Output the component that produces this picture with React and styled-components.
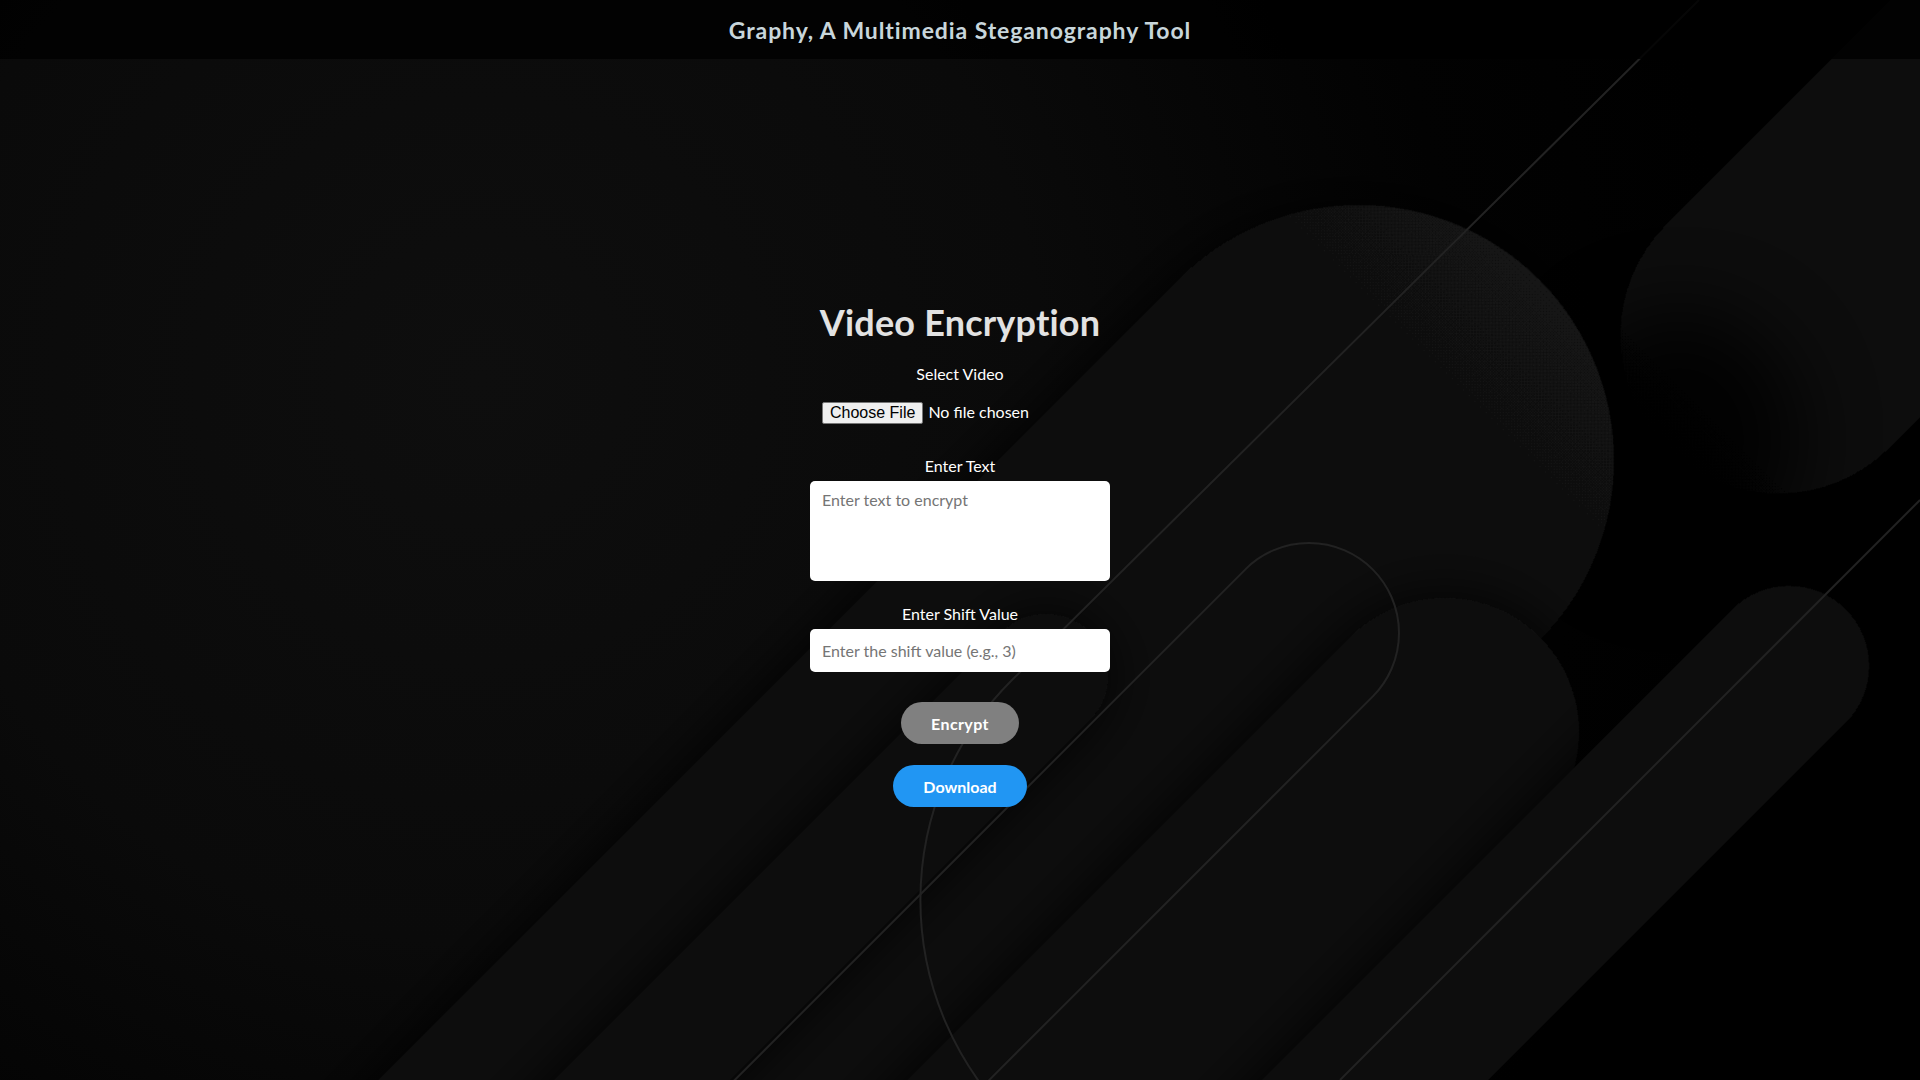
import styled, { createGlobalStyle } from "styled-components";

const GlobalStyle = createGlobalStyle`
  html, body {
    margin: 0;
    padding: 0;
    background: #000;
  }
  body {
    font-family: Lato, "Open Sans", "Noto Sans", sans-serif;
  }
  * {
    box-sizing: border-box;
  }
`;

const Page = styled.div`
  position: relative;
  min-height: 100vh;
  overflow: hidden;
  background: #000;
`;

const Backdrop = styled.svg`
  position: absolute;
  inset: 0;
  width: 100%;
  height: 100%;
  z-index: 0;
`;

const Header = styled.header`
  position: relative;
  z-index: 1;
  height: 59px;
  display: flex;
  align-items: center;
  justify-content: center;
  background: rgba(0, 0, 0, 0.8);
  color: #c8d6db;
  font-size: 23px;
  font-weight: 700;
  letter-spacing: 0.9px;
`;

const Main = styled.main`
  position: relative;
  z-index: 1;
  display: flex;
  flex-direction: column;
  align-items: center;
  padding-top: 242px;
`;

const Title = styled.h2`
  margin: 0;
  font-size: 36px;
  line-height: 43px;
  font-weight: 700;
  letter-spacing: 0.2px;
  color: #e2e2e2;
`;

const Label = styled.label`
  display: block;
  margin-top: ${(p) => p.$top}px;
  font-size: 16px;
  line-height: 19px;
  color: #fff;
`;

const FileInput = styled.input`
  width: 276px;
  margin-top: 19px;
  font-family: Lato, "Open Sans", sans-serif;
  font-size: 16px;
  color: #fff;

  &::file-selector-button {
    font-family: "Liberation Sans", Arial, sans-serif;
    font-size: 16px;
    padding: 1px 7px;
    margin-right: 5px;
    color: #000;
    background: #efefef;
    border: 1px solid #767676;
    border-radius: 2px;
  }
`;

const fieldBase = `
  width: 300px;
  margin-top: 6px;
  padding: 0 12px;
  border: none;
  border-radius: 5px;
  background: #fff;
  font-family: Lato, "Open Sans", sans-serif;
  font-size: 16px;
  color: #222;
  outline: none;

  &::placeholder {
    color: #757575;
  }
`;

const TextArea = styled.textarea`
  ${fieldBase}
  height: 100px;
  padding-top: 9px;
  resize: none;
`;

const TextInput = styled.input`
  ${fieldBase}
  height: 43px;
`;

const PillButton = styled.button`
  margin-top: ${(p) => p.$top}px;
  height: 42px;
  padding: 0 ${(p) => p.$pad}px;
  border: none;
  border-radius: 21px;
  background: ${(p) => p.$bg};
  color: #fff;
  font-family: Lato, "Open Sans", sans-serif;
  font-size: 16px;
  font-weight: 700;
  letter-spacing: ${(p) => p.$track || 0}px;
  cursor: pointer;
`;

const Capsule = ({ cx, cy, r, angle, len = 2400, fill, stroke, filter }) => (
  <rect
    x={-r}
    y={-r}
    width={r * 2}
    height={len}
    rx={r}
    ry={r}
    transform={`translate(${cx} ${cy}) rotate(${angle})`}
    fill={fill || "none"}
    stroke={stroke}
    strokeWidth={stroke ? 2 : 0}
    filter={filter}
  />
);

const Background = () => (
  <Backdrop viewBox="0 0 1920 1080" preserveAspectRatio="xMidYMid slice">
    <defs>
      <radialGradient id="base" cx="480" cy="380" r="1250" gradientUnits="userSpaceOnUse">
        <stop offset="0" stopColor="#0e0e0e" />
        <stop offset="0.45" stopColor="#0a0a0a" />
        <stop offset="0.78" stopColor="#020202" />
        <stop offset="1" stopColor="#000" />
      </radialGradient>
      <linearGradient id="gA" x1="0" y1="-255" x2="0" y2="1100" gradientUnits="userSpaceOnUse">
        <stop offset="0" stopColor="#121212" />
        <stop offset="0.4" stopColor="#0e0e0e" />
        <stop offset="1" stopColor="#080808" />
      </linearGradient>
      <linearGradient id="gB" x1="0" y1="-134" x2="0" y2="900" gradientUnits="userSpaceOnUse">
        <stop offset="0" stopColor="#111" />
        <stop offset="1" stopColor="#090909" />
      </linearGradient>
      <linearGradient id="gC" x1="0" y1="-80" x2="0" y2="700" gradientUnits="userSpaceOnUse">
        <stop offset="0" stopColor="#111" />
        <stop offset="1" stopColor="#090909" />
      </linearGradient>
      <linearGradient id="gD" x1="0" y1="-156" x2="0" y2="560" gradientUnits="userSpaceOnUse">
        <stop offset="0" stopColor="#060606" />
        <stop offset="0.3" stopColor="#0a0a0a" />
        <stop offset="1" stopColor="#0e0e0e" />
      </linearGradient>
      <filter id="shadow" x="-50%" y="-50%" width="200%" height="200%">
        <feDropShadow dx="0" dy="0" stdDeviation="28" floodColor="#000" floodOpacity="0.95" />
      </filter>
      <filter id="soft" x="-100%" y="-100%" width="300%" height="300%">
        <feGaussianBlur stdDeviation="40" />
      </filter>
    </defs>
    <rect width="1920" height="1080" fill="url(#base)" />
    <Capsule cx={1778} cy={336} r={158} angle={225} fill="url(#gD)" filter="url(#shadow)" />
    <ellipse cx="1680" cy="440" rx="120" ry="130" fill="#000" opacity="0.85" filter="url(#soft)" />
    <Capsule cx={1359} cy={460} r={255} angle={45} fill="url(#gA)" filter="url(#shadow)" />
    <Capsule cx={1046} cy={676} r={62} angle={45} fill="url(#gB)" filter="url(#shadow)" />
    <Capsule cx={1445} cy={732} r={134} angle={45} fill="url(#gB)" filter="url(#shadow)" />
    <Capsule cx={1789} cy={666} r={80} angle={45} fill="url(#gC)" filter="url(#shadow)" />
    <Capsule cx={1309} cy={633} r={90} angle={45} stroke="#222" />
    <path d="M 1699 0 L 1011 681 A 310 310 0 0 0 1011 1119" fill="none" stroke="#222" strokeWidth="2" />
    <path d="M 1920 500 L 1340 1080" fill="none" stroke="#222" strokeWidth="2" />
  </Backdrop>
);

export default function App() {
  return (
    <>
      <GlobalStyle />
      <Page>
        <Background />
        <Header>Graphy, A Multimedia Steganography Tool</Header>
        <Main>
          <Title>Video Encryption</Title>
          <Label $top={20} htmlFor="video">Select Video</Label>
          <FileInput id="video" type="file" accept="video/*" />
          <Label $top={32} htmlFor="secret">Enter Text</Label>
          <TextArea id="secret" placeholder="Enter text to encrypt" />
          <Label $top={23} htmlFor="shift">Enter Shift Value</Label>
          <TextInput id="shift" type="number" placeholder="Enter the shift value (e.g., 3)" />
          <PillButton $top={30} $pad={30} $track={0.4} $bg="#808080">Encrypt</PillButton>
          <PillButton $top={21} $pad={30} $bg="#2196f3">Download</PillButton>
        </Main>
      </Page>
    </>
  );
}
